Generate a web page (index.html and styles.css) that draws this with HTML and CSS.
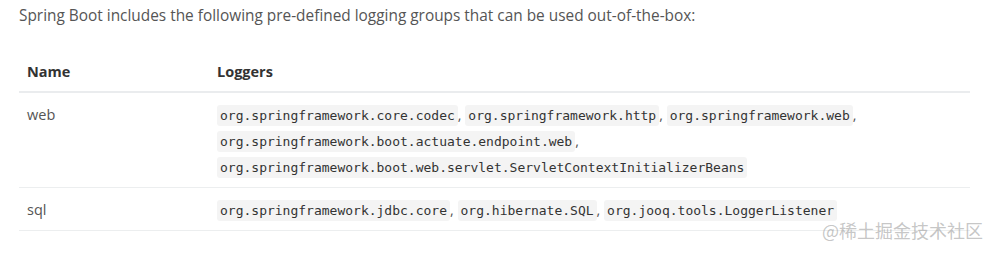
FILE: index.html
```html
<!DOCTYPE html>
<html lang="en">
<head>
    <meta charset="UTF-8">
    <title>Logging Groups</title>
    <link rel="stylesheet" href="styles.css">
</head>
<body>
    <div class="doc">
        <p class="intro">Spring Boot includes the following pre-defined logging groups that can be used out-of-the-box:</p>

        <table class="groups">
            <thead>
                <tr>
                    <th class="col-name">Name</th>
                    <th>Loggers</th>
                </tr>
            </thead>
            <tbody>
                <tr>
                    <td>web</td>
                    <td><code>org.springframework.core.codec</code>, <code>org.springframework.http</code>, <code>org.springframework.web</code>, <code>org.springframework.boot.actuate.endpoint.web</code>, <code>org.springframework.boot.web.servlet.ServletContextInitializerBeans</code></td>
                </tr>
                <tr>
                    <td>sql</td>
                    <td><code>org.springframework.jdbc.core</code>, <code>org.hibernate.SQL</code>, <code>org.jooq.tools.LoggerListener</code></td>
                </tr>
            </tbody>
        </table>
    </div>

    <div class="watermark">@稀土掘金技术社区</div>
</body>
</html>
```

FILE: styles.css
```css
* {
    box-sizing: border-box;
    margin: 0;
    padding: 0;
}

body {
    font-family: 'Open Sans', 'Noto Sans', sans-serif;
    color: #444;
    background: #fff;
    width: 994px;
    height: 253px;
    position: relative;
    overflow: hidden;
}

.doc {
    padding: 5px 24px 0 19px;
}

.intro {
    font-size: 15.4px;
    line-height: 22px;
    color: #555;
    margin-bottom: 22px;
}

.groups {
    width: 951px;
    border-collapse: collapse;
    font-size: 14.5px;
}

.groups th,
.groups td {
    text-align: left;
    vertical-align: top;
    padding: 9px 8px 7px;
    line-height: 26px;
}

.groups th {
    padding: 10px 8px 6px;
    font-weight: 700;
    color: #333;
    border-bottom: 2px solid #eaecee;
}

.groups td {
    color: #555;
    border-bottom: 1px solid #eceeef;
}

.col-name {
    width: 190px;
}

.groups code {
    font-family: 'DejaVu Sans Mono', monospace;
    font-size: 13px;
    line-height: 1;
    color: #333;
    background: #f4f4f4;
    border-radius: 3px;
    padding: 3px 3px;
}

.watermark {
    position: absolute;
    left: 822px;
    top: 220px;
    font-family: 'Noto Sans CJK SC', sans-serif;
    font-size: 18px;
    line-height: 20px;
    color: rgba(150, 150, 150, 0.55);
}
```
